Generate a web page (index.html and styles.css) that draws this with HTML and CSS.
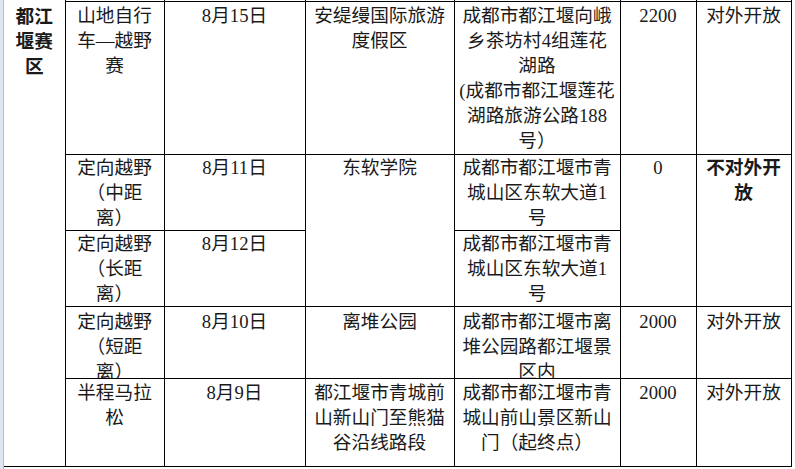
FILE: index.html
```html
<!DOCTYPE html>
<html lang="zh-CN">
<head>
<meta charset="utf-8">
<title>都江堰赛区</title>
<link rel="stylesheet" href="styles.css">
</head>
<body>
<div class="page">
  <div class="margin-strip"></div>
  <table class="grid">
    <colgroup>
      <col class="c1"><col class="c2"><col class="c3"><col class="c4"><col class="c5"><col class="c6"><col class="c7">
    </colgroup>
    <tr class="stub">
      <td class="zone" rowspan="7"><div class="zone-text">都江<br>堰赛<br>区</div></td>
      <td></td><td></td><td></td><td></td><td></td><td></td>
    </tr>
    <tr class="r1">
      <td>山地自行<br>车—越野<br>赛</td>
      <td>8月15日</td>
      <td>安缇缦国际旅游<br>度假区</td>
      <td>成都市都江堰向峨<br>乡茶坊村4组莲花<br>湖路<br>(成都市都江堰莲花<br>湖路旅游公路188<br>号）</td>
      <td>2200</td>
      <td>对外开放</td>
    </tr>
    <tr class="r2">
      <td><div class="tight">定向越野<br>（中距<br>离）</div></td>
      <td><div class="tight">8月11日</div></td>
      <td rowspan="2">东软学院</td>
      <td><div class="tight">成都市都江堰市青<br>城山区东软大道1<br>号</div></td>
      <td rowspan="2">0</td>
      <td rowspan="2" class="bold">不对外开<br>放</td>
    </tr>
    <tr class="r3">
      <td><div class="tight">定向越野<br>（长距<br>离）</div></td>
      <td><div class="tight">8月12日</div></td>
      <td><div class="tight">成都市都江堰市青<br>城山区东软大道1<br>号</div></td>
    </tr>
    <tr class="r4">
      <td><div class="clip">定向越野<br>（短距<br>离）</div></td>
      <td><div class="clip">8月10日</div></td>
      <td><div class="clip">离堆公园</div></td>
      <td><div class="clip">成都市都江堰市离<br>堆公园路都江堰景<br>区内</div></td>
      <td><div class="clip">2000</div></td>
      <td><div class="clip">对外开放</div></td>
    </tr>
    <tr class="r5">
      <td>半程马拉<br>松</td>
      <td>8月9日</td>
      <td>都江堰市青城前<br>山新山门至熊猫<br>谷沿线路段</td>
      <td>成都市都江堰市青<br>城山前山景区新山<br>门（起终点）</td>
      <td>2000</td>
      <td>对外开放</td>
    </tr>
  </table>
</div>
</body>
</html>
```
FILE: styles.css
```css
html, body {
  margin: 0;
  padding: 0;
  background: #ffffff;
}
body {
  font-family: "Liberation Serif", "Noto Sans CJK SC", serif;
  font-size: 18.67px;
  line-height: 25px;
  color: #1a1a1a;
}
.page {
  display: flex;
  align-items: stretch;
  height: 469px;
  overflow: hidden;
}
.margin-strip {
  width: 3px;
  flex: none;
  background: #dde6f1;
  border-right: 1px solid #aebfd6;
}
.grid {
  border-collapse: collapse;
  table-layout: fixed;
  width: 787px;
  flex: none;
  align-self: flex-start;
}
.c1 { width: 61px; }
.c2 { width: 99px; }
.c3 { width: 141px; }
.c4 { width: 149px; }
.c5 { width: 166px; }
.c6 { width: 76px; }
.c7 { width: 95px; }
.grid td {
  border: 1px solid #000000;
  padding: 1px 0 0 0;
  text-align: center;
  vertical-align: top;
  white-space: nowrap;
}
.grid .stub td {
  border-top: none;
  height: 1px;
  padding: 0;
}
.grid td.zone {
  border-left: none;
  border-top: none;
  font-weight: bold;
  padding-top: 4px;
}
.bold {
  font-weight: bold;
}
.r1 td { height: 151px; }
.r2 td, .r3 td { height: 75px; padding-top: 0; }
.r4 td { height: 69px; padding-top: 2px; }
.r5 td { height: 86px; }
.tight {
  margin-bottom: -2px;
}
.clip {
  height: 69px;
  overflow: hidden;
}
```
